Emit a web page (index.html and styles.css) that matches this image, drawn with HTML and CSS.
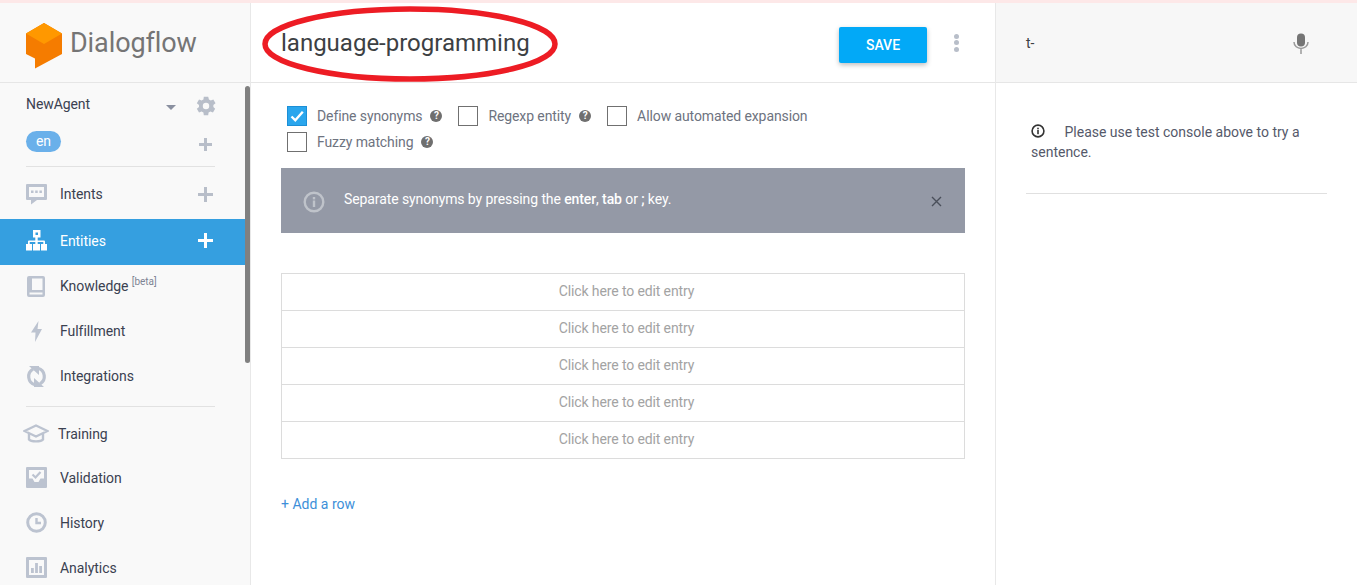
FILE: index.html
```html
<!DOCTYPE html>
<html lang="en">
<head>
  <meta charset="UTF-8" />
  <title>Dialogflow</title>
  <link rel="stylesheet" href="styles.css">
</head>

<body>
  <div class="topline"></div>

  <div class="app">
    <div class="sidebar">
      <div class="logo-bar">
        <svg class="logo" width="37" height="46" viewBox="0 0 37 46">
          <path d="M0 10.500L18 0L36 10.500V31L9 45.500V35.500L0 31Z" fill="#f57c00"/>
          <path d="M0 10.500L18 0L36 10.500L18 21Z" fill="#ff9800"/>
        </svg>
        <span class="logo-text">Dialogflow</span>
      </div>

      <div class="side-scroll">
        <div class="agent-row">
          <span class="agent-name">NewAgent</span>
          <span class="caret"></span>
          <svg class="gear" width="22" height="22" viewBox="0 0 24 24"><path fill="#b8bec9" d="M20 13.200a8 8 0 0 0 0-2.400l2.400-1.800-2.400-4.100-2.800 1.100a8 8 0 0 0-2-1.200L14.400 1.900H9.600l-.4 2.900a8 8 0 0 0-2 1.200L4.400 4.900 2 9l2.400 1.800a8 8 0 0 0 0 2.400L2 15l2.400 4.100 2.800-1.100a8 8 0 0 0 2 1.200l.4 2.900h4.800l.4-2.900a8 8 0 0 0 2-1.200l2.800 1.100L22 15zM12 15.500a3.500 3.500 0 1 1 0-7 3.500 3.500 0 0 1 0 7z"/></svg>
        </div>
        <div class="lang-row">
          <span class="lang-pill">en</span>
          <span class="plus plus-small"></span>
        </div>
        <div class="side-rule"></div>

        <div class="nav-item nav-intents">
          <svg class="nav-icon" width="21" height="21" viewBox="0 0 21 21"><path fill="#bcc3d0" d="M1 0h19a1 1 0 0 1 1 1v14a1 1 0 0 1-1 1H11l-6 4.500V16H1a1 1 0 0 1-1-1V1a1 1 0 0 1 1-1zm2 3v10h15V3z"/><rect x="5" y="6.500" width="2.500" height="2.500" fill="#bcc3d0"/><rect x="9.200" y="6.500" width="2.500" height="2.500" fill="#bcc3d0"/><rect x="13.400" y="6.500" width="2.500" height="2.500" fill="#bcc3d0"/></svg>
          <span>Intents</span>
          <span class="plus"></span>
        </div>
        <div class="nav-item active">
          <svg class="nav-icon" width="21" height="21" viewBox="0 0 21 21"><path fill="#fff" fill-rule="evenodd" d="M7 0h7.500v7.500H11.700v3H18a1 1 0 0 1 1 1V14h2v6.500h-6V14h2.300v-2H11.700v2H14v6.500H7V14h2.300v-2H3.700v2H6v6.500H0V14h2v-2.500a1 1 0 0 1 1-1h6.300v-3H7zM9.500 2.500v2.500H12V2.500z"/></svg>
          <span>Entities</span>
          <span class="plus"></span>
        </div>
        <div class="nav-item">
          <svg class="nav-icon" width="21" height="21" viewBox="0 0 21 21"><path fill="#bcc3d0" d="M3 0h14a2 2 0 0 1 2 2v17a2 2 0 0 1-2 2H3a2 2 0 0 1-2-2V2a2 2 0 0 1 2-2zm3 2.500V14h10.500V2.500zM3.500 16.500V18.500h13v-2z"/></svg>
          <span>Knowledge <sup class="beta">[beta]</sup></span>
        </div>
        <div class="nav-item">
          <svg class="nav-icon" width="21" height="21" viewBox="0 0 21 21"><path fill="#bcc3d0" d="M12.500 0L5 11.500h4.500L9 21l7-13h-4.500z"/></svg>
          <span>Fulfillment</span>
        </div>
        <div class="nav-item">
          <svg class="nav-icon" width="21" height="21" viewBox="0 0 21 21"><path fill="none" stroke="#bcc3d0" stroke-width="3.200" d="M7 3.200A8.500 8.500 0 0 0 9 18.800M14 17.800A8.500 8.500 0 0 0 12 2.200"/><path fill="#bcc3d0" d="M3 0H13V9zM18 21H8V12z"/></svg>
          <span>Integrations</span>
        </div>
        <div class="side-rule rule-lower"></div>

        <div class="nav-item nav-training">
          <svg class="nav-icon icon-wide" width="26" height="20" viewBox="0 0 26 20"><path fill="none" stroke="#bcc3d0" stroke-width="2.400" d="M1.500 7L13 1.500 24.500 7 13 12.500zM6 10v5.500c2 2.500 12 2.500 14 0V10"/></svg>
          <span>Training</span>
        </div>
        <div class="nav-item nav-plain">
          <svg class="nav-icon" width="21" height="21" viewBox="0 0 21 21"><path fill="#bcc3d0" fill-rule="evenodd" d="M1 0h19a1 1 0 0 1 1 1v19a1 1 0 0 1-1 1H1a1 1 0 0 1-1-1V1a1 1 0 0 1 1-1zm2 3v8.500h3.500l2 3.500h4l2-3.500H18V3z"/><path fill="none" stroke="#bcc3d0" stroke-width="2.200" d="M6.500 7.500l3 3 5-5.500"/></svg>
          <span>Validation</span>
        </div>
        <div class="nav-item nav-plain">
          <svg class="nav-icon" width="21" height="21" viewBox="0 0 21 21"><circle cx="10.500" cy="10.500" r="8.800" fill="none" stroke="#bcc3d0" stroke-width="3"/><path fill="none" stroke="#bcc3d0" stroke-width="2.400" d="M10.500 6v5H15"/></svg>
          <span>History</span>
        </div>
        <div class="nav-item nav-plain">
          <svg class="nav-icon" width="21" height="21" viewBox="0 0 21 21"><path fill="#bcc3d0" fill-rule="evenodd" d="M1 0h19a1 1 0 0 1 1 1v19a1 1 0 0 1-1 1H1a1 1 0 0 1-1-1V1a1 1 0 0 1 1-1zm2 3v15h15V3z"/><rect x="5" y="11" width="2.800" height="5" fill="#bcc3d0"/><rect x="9.100" y="6" width="2.800" height="10" fill="#bcc3d0"/><rect x="13.200" y="9" width="2.800" height="7" fill="#bcc3d0"/></svg>
          <span>Analytics</span>
        </div>
      </div>
      <div class="scroll-thumb"></div>
    </div>

    <div class="main">
      <div class="main-head">
        <h1 class="entity-name">language-programming</h1>
        <button class="save-btn">SAVE</button>
        <span class="more-dots"><i></i><i></i><i></i></span>
      </div>

      <div class="main-body">
        <div class="options">
          <label class="opt">
            <span class="box checked">
              <svg width="18" height="18" viewBox="0 0 18 18"><path fill="none" stroke="#fff" stroke-width="2.400" d="M3.500 9.500l3.800 3.800 7.500-8.500"/></svg>
            </span>
            Define synonyms
            <span class="help">?</span>
          </label>
          <label class="opt">
            <span class="box"></span>
            Regexp entity
            <span class="help">?</span>
          </label>
          <label class="opt">
            <span class="box"></span>
            Allow automated expansion
          </label>
          <label class="opt">
            <span class="box"></span>
            Fuzzy matching
            <span class="help">?</span>
          </label>
        </div>

        <div class="notice">
          <svg class="notice-icon" width="22" height="22" viewBox="0 0 22 22"><circle cx="11" cy="11" r="9.300" fill="none" stroke="#bfc3ca" stroke-width="2.400"/><rect x="9.800" y="9.500" width="2.400" height="6.500" fill="#bfc3ca"/><rect x="9.800" y="6" width="2.400" height="2.400" fill="#bfc3ca"/></svg>
          <span class="notice-text">Separate synonyms by pressing the <b>enter</b>, <b>tab</b> or <b>;</b> key.</span>
          <svg class="notice-close" width="11" height="11" viewBox="0 0 11 11"><path stroke="#4a4f5a" stroke-width="1.400" d="M1 1l9 9M10 1l-9 9"/></svg>
        </div>

        <div class="entries">
          <div class="entry">Click here to edit entry</div>
          <div class="entry">Click here to edit entry</div>
          <div class="entry">Click here to edit entry</div>
          <div class="entry">Click here to edit entry</div>
          <div class="entry">Click here to edit entry</div>
        </div>

        <a class="add-row">+ Add a row</a>
      </div>
    </div>

    <div class="console">
      <div class="console-head">
        <span class="console-input">t-</span>
        <svg class="mic" width="16" height="21" viewBox="0 0 16 21"><rect x="4" y="0.500" width="8" height="13" rx="4" fill="#757575"/><path fill="none" stroke="#9a9a9a" stroke-width="1.500" d="M1 9c0 8.500 14 8.500 14 0M8 15.500V21"/></svg>
      </div>
      <div class="console-body">
        <p class="console-hint">
          <svg class="hint-icon" width="14" height="14" viewBox="0 0 14 14"><circle cx="7" cy="7" r="5.900" fill="none" stroke="#333" stroke-width="1.600"/><rect x="6.200" y="6" width="1.600" height="4.200" fill="#333"/><rect x="6.200" y="3.700" width="1.600" height="1.600" fill="#333"/></svg>
          Please use test console above to try a sentence.
        </p>
      </div>
    </div>
  </div>

  <!-- red mark drawn over the title -->
  <svg class="red-mark" width="298" height="78" viewBox="0 0 298 78"><ellipse cx="149" cy="39" rx="145" ry="35" fill="none" stroke="#ed1c24" stroke-width="5.500"/></svg>
</body>
</html>
```

FILE: styles.css
```css
* {
  box-sizing: border-box;
}

html, body {
  margin: 0;
  height: 585px;
  overflow: hidden;
}

body {
  position: relative;
  background: #fff;
  color: #3c4043;
  font-family: Roboto, "Liberation Sans", sans-serif;
  font-size: 14px;
}

.topline {
  height: 3px;
  background: #fde8e8;
}

.app {
  display: flex;
  height: 582px;
}

/* left column */
.sidebar {
  position: relative;
  width: 251px;
  flex: none;
  background: #f9f9f9;
  border-right: 1px solid #e8e8e8;
  overflow: hidden;
}

.logo-bar {
  display: flex;
  align-items: center;
  height: 80px;
  padding: 0 0 0 26px;
  border-bottom: 1px solid #e6e6e6;
}

.logo {
  flex: none;
  margin-top: 7px;
}

.logo-text {
  margin-left: 7px;
  color: #757575;
  font-size: 27px;
  letter-spacing: -0.1px;
}

.side-scroll {
  width: 245px;
}

.agent-row {
  display: flex;
  align-items: center;
  height: 42px;
  padding: 0 0 0 26px;
}

.agent-name {
  width: 140px;
  color: #3b4151;
  letter-spacing: -0.1px;
}

.caret {
  width: 0;
  height: 0;
  margin-top: 6px;
  border-left: 5px solid transparent;
  border-right: 5px solid transparent;
  border-top: 5px solid #8a90a0;
}

.gear {
  margin-left: 19px;
  margin-top: 4px;
}

.lang-row {
  display: flex;
  align-items: center;
  justify-content: space-between;
  height: 21px;
  margin-top: 6px;
  padding: 0 33px 0 26px;
}

.lang-pill {
  width: 35px;
  height: 21px;
  line-height: 20px;
  border-radius: 11px;
  background: #6ab0ea;
  color: #fff;
  font-size: 14px;
  text-align: center;
}

.plus {
  position: relative;
  display: block;
  width: 15px;
  height: 15px;
  margin-left: auto;
  margin-right: 32px;
}

.plus::before,
.plus::after {
  content: "";
  position: absolute;
  background: #b8bec9;
}

.plus::before {
  left: 0;
  right: 0;
  top: 6px;
  height: 3px;
}

.plus::after {
  top: 0;
  bottom: 0;
  left: 6px;
  width: 3px;
}

.plus-small {
  width: 13px;
  height: 13px;
  margin: 5px 0 0;
}

.plus-small::before {
  top: 5px;
}

.plus-small::after {
  left: 5px;
}

.side-rule {
  height: 1px;
  margin: 14px 30px 0 26px;
  background: #e2e2e2;
}

.rule-lower {
  margin-top: 6px;
}

.nav-item {
  display: flex;
  align-items: center;
  height: 45px;
  padding: 0 0 3px 26px;
  color: #3b4151;
}

.nav-item > span:first-of-type {
  margin-left: 13px;
  letter-spacing: -0.05px;
}

.nav-icon {
  flex: none;
}

.nav-intents {
  height: 52px;
  padding: 2px 0 0 26px;
}

.nav-item.active {
  height: 46px;
  background: #359fe0;
  color: #fff;
}

.nav-item.active .plus::before,
.nav-item.active .plus::after {
  background: #fff;
}

.beta {
  color: #7e8494;
  font-size: 10px;
  line-height: 0;
}

.nav-training {
  height: 48px;
  padding: 6px 0 0 23px;
}

.nav-training > span:first-of-type {
  margin-left: 9px;
}

.nav-plain {
  padding-bottom: 0;
}

.scroll-thumb {
  position: absolute;
  top: 83px;
  left: 245px;
  width: 5px;
  height: 277px;
  border-radius: 3px;
  background: #808080;
}

/* middle column */
.main {
  flex: 1;
  min-width: 0;
  border-right: 1px solid #e8e8e8;
}

.main-head {
  display: flex;
  align-items: center;
  height: 80px;
  padding: 0 36px 0 30px;
  border-bottom: 1px solid #e6e6e6;
}

.entity-name {
  margin: 0;
  flex: 1;
  color: #3c4043;
  font-size: 24px;
  font-weight: 400;
}

.save-btn {
  width: 88px;
  height: 36px;
  margin-top: 4px;
  padding: 0;
  border: 0;
  border-radius: 2px;
  background: #02a9f7;
  box-shadow: 0 2px 5px rgba(0, 0, 0, 0.26);
  color: #fff;
  font-family: inherit;
  font-size: 14px;
  font-weight: 500;
}

.more-dots {
  display: flex;
  flex-direction: column;
  gap: 1.500px;
  margin: 0 0 0 27px;
}

.more-dots i {
  display: block;
  width: 5px;
  height: 5px;
  border-radius: 50%;
  background: #b8bec9;
}

.main-body {
  padding: 23px 30px 0;
}

.options {
  display: flex;
  flex-wrap: wrap;
  gap: 6px 0;
  width: 600px;
  padding-left: 6px;
}

.opt {
  display: flex;
  align-items: center;
  height: 20px;
  margin-right: 16px;
  color: #6e7380;
  letter-spacing: -0.1px;
}

.opt:nth-child(3) {
  margin-right: 0;
}

.opt:nth-child(4) {
  flex-basis: 100%;
}

.box {
  display: block;
  width: 20px;
  height: 20px;
  margin-right: 10px;
  border: 1px solid #707070;
  background: #fff;
}

.box.checked {
  border-color: #1c8fd6;
  background: #2aa6ed;
}

.box.checked svg {
  display: block;
  margin: 0;
}

.help {
  display: block;
  width: 12px;
  height: 12px;
  margin-left: 8px;
  border-radius: 50%;
  background: #6f6f6f;
  color: #fff;
  font-size: 10px;
  font-weight: 700;
  line-height: 12px;
  text-align: center;
}

.notice {
  display: flex;
  align-items: center;
  width: 684px;
  height: 65px;
  margin-top: 16px;
  padding: 0 23px 0 22px;
  background: #9499a6;
  color: #fff;
}

.notice-icon {
  flex: none;
  margin-top: 3px;
}

.notice-text {
  flex: 1;
  margin: -3px 0 0 19px;
  letter-spacing: -0.1px;
}

.notice-text b {
  font-weight: 500;
}

.notice-close {
  margin-top: 2px;
}

.entries {
  width: 684px;
  margin-top: 40px;
  border: 1px solid #dcdcdc;
}

.entry {
  height: 37px;
  padding-left: 7px;
  line-height: 35px;
  border-bottom: 1px solid #dcdcdc;
  color: #a3a3a3;
  letter-spacing: -0.12px;
  text-align: center;
}

.entry:last-child {
  height: 36px;
  border-bottom: 0;
}

.add-row {
  display: block;
  margin-top: 37px;
  color: #3d8fd9;
}

/* right column */
.console {
  width: 361px;
  flex: none;
}

.console-head {
  display: flex;
  align-items: center;
  justify-content: space-between;
  height: 80px;
  padding: 0 48px 0 30px;
  background: #f7f7f7;
  border-bottom: 1px solid #e6e6e6;
  font-size: 14px;
}

.console-input {
  color: #3c4043;
}

.mic {
  margin-top: 1px;
}

.console-body {
  padding: 39px 30px 0;
}

.console-hint {
  margin: 0;
  padding: 0 0 31px 5px;
  border-bottom: 1px solid #e0e0e0;
  color: #55596a;
  line-height: 20px;
}

.hint-icon {
  margin-right: 16px;
  vertical-align: -1px;
}

/* overlay */
.red-mark {
  position: absolute;
  left: 261px;
  top: 5px;
}
```
